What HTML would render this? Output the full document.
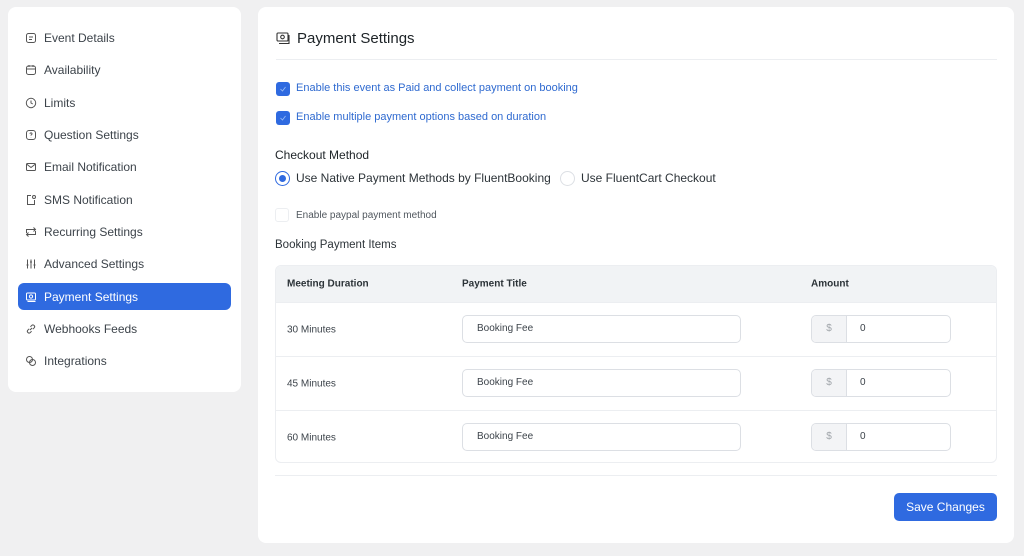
<!DOCTYPE html>
<html><head><style>
*{box-sizing:border-box;margin:0;padding:0}
body{width:1024px;height:556px;background:#f0f0f1;font-family:"Liberation Sans",sans-serif;position:relative;overflow:hidden;color:#1d2327}
.side{position:absolute;left:8px;top:7px;width:233px;height:385px;background:#fff;border-radius:8px}
.it{position:absolute;left:10px;width:213px;height:27px;display:flex;align-items:center;padding-left:7px;font-size:12px;color:#3c434a;border-radius:6px}
.it svg{width:12px;height:12px;margin-right:7px;flex:none}
.it.on{background:#2f6ae0;color:#fff}
.main{position:absolute;left:258px;top:7px;width:756px;height:536px;background:#fff;border-radius:8px}
.abs{position:absolute}
.cb{position:absolute;width:14px;height:14px;border-radius:3px;background:#2f6ae0}
.lbl{position:absolute;font-size:11px;color:#2f6ad0}
.tbl{position:absolute;left:17px;top:258px;width:722px;height:198px;border:1px solid #eceef1;border-radius:6px;overflow:hidden}
.th{height:36px;background:#f1f3f5;position:relative;font-size:10px;font-weight:bold;color:#2c3338}
.row{height:54px;border-top:1px solid #eceef1;position:relative;font-size:10px;color:#3c434a}
.c{position:absolute;top:50%;transform:translateY(-50%)}
.inp{position:absolute;left:186px;top:12px;width:279px;height:28px;border:1px solid #dcdfe4;border-radius:5px;padding-left:14px;line-height:26px}
.amt{position:absolute;left:535px;top:12px;width:140px;height:28px;border:1px solid #dcdfe4;border-radius:5px;overflow:hidden}
.amt .p{position:absolute;left:0;top:0;width:35px;height:26px;background:#f3f4f6;border-right:1px solid #dcdfe4;text-align:center;line-height:26px;color:#a0a5aa}
.amt .v{position:absolute;left:48px;line-height:26px}
</style></head><body>
<div class="side">
<div class="it" style="top:17px"><svg viewBox="0 0 12 12" fill="none" stroke="#555" stroke-width="1"><rect x="1.5" y="1.5" width="9" height="9" rx="2"/><path d="M4 5h4M4 7.5h3"/></svg>Event Details</div>
<div class="it" style="top:49px"><svg viewBox="0 0 12 12" fill="none" stroke="#555" stroke-width="1"><rect x="1.5" y="2" width="9" height="8.5" rx="2"/><path d="M1.5 5h9M4 1v2M8 1v2"/></svg>Availability</div>
<div class="it" style="top:82px"><svg viewBox="0 0 12 12" fill="none" stroke="#555" stroke-width="1"><circle cx="6" cy="6" r="4.7"/><path d="M6 3.5V6l1.8 1"/></svg>Limits</div>
<div class="it" style="top:114px"><svg viewBox="0 0 12 12" fill="none" stroke="#555" stroke-width="1"><rect x="1.5" y="1.5" width="9" height="9" rx="2.5"/><path d="M5 4.8a1 1 0 1 1 1.5.9c-.4.2-.5.5-.5.9M6 8.3v.2"/></svg>Question Settings</div>
<div class="it" style="top:146px"><svg viewBox="0 0 12 12" fill="none" stroke="#555" stroke-width="1"><rect x="1.5" y="2.5" width="9" height="7" rx="1"/><path d="M1.5 3l4.5 3.5L10.5 3"/></svg>Email Notification</div>
<div class="it" style="top:179px"><svg viewBox="0 0 12 12" fill="none" stroke="#555" stroke-width="1"><path d="M6 1.5H2.5v9h7V6"/><circle cx="9" cy="3" r="1.5"/></svg>SMS Notification</div>
<div class="it" style="top:211px"><svg viewBox="0 0 12 12" fill="none" stroke="#555" stroke-width="1"><path d="M1.5 7V3.5h9M8.5 1.5l2 2-2 2M10.5 5v3.5h-9M3.5 10.5l-2-2 2-2"/></svg>Recurring Settings</div>
<div class="it" style="top:243px"><svg viewBox="0 0 12 12" fill="none" stroke="#555" stroke-width="1"><path d="M2.5 1.5v9M6 1.5v9M9.5 1.5v9M1.5 7h2M5 4h2M8.5 7h2"/></svg>Advanced Settings</div>
<div class="it on" style="top:276px"><svg viewBox="0 0 12 12" fill="none" stroke="#fff" stroke-width="1"><rect x="1.5" y="2" width="9" height="7" rx="1"/><circle cx="6" cy="5.5" r="1.6"/><path d="M2.5 10.5h8"/></svg>Payment Settings</div>
<div class="it" style="top:308px"><svg viewBox="0 0 12 12" fill="none" stroke="#555" stroke-width="1"><path d="M5 7l2-2M4.2 5.8l-1.4 1.4a1.7 1.7 0 0 0 2.4 2.4l1.4-1.4M7.8 6.2l1.4-1.4a1.7 1.7 0 0 0-2.4-2.4L5.4 3.8"/></svg>Webhooks Feeds</div>
<div class="it" style="top:340px"><svg viewBox="0 0 12 12" fill="none" stroke="#555" stroke-width="1"><rect x="1.5" y="1.5" width="6" height="6" rx="3"/><rect x="4.5" y="4.5" width="6" height="6" rx="3"/></svg>Integrations</div>
</div>
<div class="main">
<svg class="abs" style="left:18px;top:25px" width="14" height="13" viewBox="0 0 14 13" fill="none" stroke="#333" stroke-width="1.1"><rect x="1" y="1" width="11" height="8" rx="1"/><circle cx="6.5" cy="5" r="1.8"/><path d="M3 11.5h10V3"/></svg>
<div class="abs" style="left:39px;top:23px;font-size:15px;color:#1d2327">Payment Settings</div>
<div class="abs" style="left:18px;top:52px;width:721px;height:1px;background:#eceef1"></div>
<div class="cb" style="left:18px;top:75px"></div><div class="lbl" style="left:38px;top:75px">Enable this event as Paid and collect payment on booking</div>
<div class="cb" style="left:18px;top:104px"></div><div class="lbl" style="left:38px;top:104px">Enable multiple payment options based on duration</div>
<svg class="abs" style="left:20px;top:77px" width="10" height="10"><path d="M2.5 5l2 2 3-4" stroke="#9fc0f5" fill="none" stroke-width="0.8"/></svg>
<svg class="abs" style="left:20px;top:106px" width="10" height="10"><path d="M2.5 5l2 2 3-4" stroke="#9fc0f5" fill="none" stroke-width="0.8"/></svg>
<div class="abs" style="left:17px;top:141px;font-size:12px">Checkout Method</div>
<div class="abs" style="left:17px;top:164px;width:15px;height:15px;border:1px solid #2f6ae0;border-radius:50%"><div style="position:absolute;left:3px;top:3px;width:7px;height:7px;border-radius:50%;background:#2f6ae0"></div></div>
<div class="abs" style="left:38px;top:164px;font-size:12px;color:#2c3338">Use Native Payment Methods by FluentBooking</div>
<div class="abs" style="left:302px;top:164px;width:15px;height:15px;border:1px solid #dcdfe4;border-radius:50%"></div>
<div class="abs" style="left:323px;top:164px;font-size:12px;color:#2c3338">Use FluentCart Checkout</div>
<div class="abs" style="left:17px;top:201px;width:14px;height:14px;border:1px solid #eceef1;border-radius:3px"></div>
<div class="abs" style="left:38px;top:203px;font-size:10px;color:#50575e">Enable paypal payment method</div>
<div class="abs" style="left:17px;top:232px;font-size:11.5px;color:#2c3338">Booking Payment Items</div>
<div class="tbl">
<div class="th"><span class="c" style="left:11px">Meeting Duration</span><span class="c" style="left:186px">Payment Title</span><span class="c" style="left:535px">Amount</span></div>
<div class="row"><span class="c" style="left:11px">30 Minutes</span><div class="inp">Booking Fee</div><div class="amt"><div class="p">$</div><div class="v">0</div></div></div>
<div class="row"><span class="c" style="left:11px">45 Minutes</span><div class="inp">Booking Fee</div><div class="amt"><div class="p">$</div><div class="v">0</div></div></div>
<div class="row"><span class="c" style="left:11px">60 Minutes</span><div class="inp">Booking Fee</div><div class="amt"><div class="p">$</div><div class="v">0</div></div></div>
</div>
<div class="abs" style="left:17px;top:468px;width:722px;height:1px;background:#eceef1"></div>
<div class="abs" style="left:636px;top:486px;width:103px;height:28px;background:#2f6ae0;border-radius:5px;color:#fff;font-size:12px;text-align:center;line-height:28px">Save Changes</div>
</div>
</body></html>
